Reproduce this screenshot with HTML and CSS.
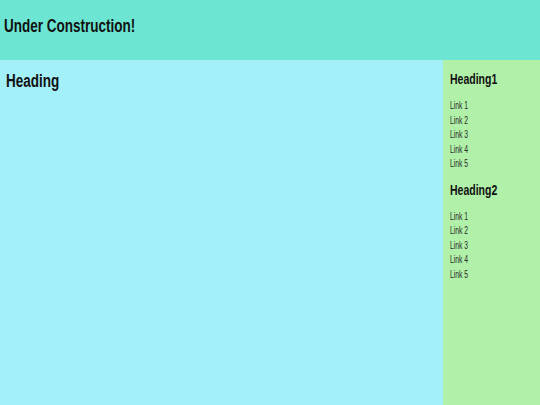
FILE: index.html
```html
<!DOCTYPE html>
<html lang="en">
<head>
    <meta charset="UTF-8">
    <meta name="viewport" content="width=device-width, initial-scale=1.0">
    <title>Under Construction</title>
    <link rel="stylesheet" href="styles.css">
</head>
<body>
    <header class="site-header">
        <h1 class="narrow">Under Construction!</h1>
    </header>
    <div class="page">
        <main class="content">
            <h2 class="narrow">Heading</h2>
        </main>
        <aside class="sidebar">
            <div class="narrow">
                <h3>Heading1</h3>
                <ul>
                    <li><a href="#">Link 1</a></li>
                    <li><a href="#">Link 2</a></li>
                    <li><a href="#">Link 3</a></li>
                    <li><a href="#">Link 4</a></li>
                    <li><a href="#">Link 5</a></li>
                </ul>
                <h3>Heading2</h3>
                <ul>
                    <li><a href="#">Link 1</a></li>
                    <li><a href="#">Link 2</a></li>
                    <li><a href="#">Link 3</a></li>
                    <li><a href="#">Link 4</a></li>
                    <li><a href="#">Link 5</a></li>
                </ul>
            </div>
        </aside>
    </div>
</body>
</html>
```

FILE: styles.css
```css
* {
    box-sizing: border-box;
    margin: 0;
    padding: 0;
    font-family: 'Liberation Sans Narrow', 'Arial Narrow', 'Liberation Sans', Arial, sans-serif;
}

html, body {
    height: 100%;
}

body {
    display: flex;
    flex-direction: column;
    color: #111;
}

/* no condensed face installed, so squeeze the regular one */
.narrow {
    transform: scaleX(0.75);
    transform-origin: left top;
}

.site-header {
    background-color: #6ce6d2;
    height: 60px;
    padding: 16px 4px 0;
}

.site-header h1 {
    font-size: 18px;
    font-weight: bold;
}

.page {
    display: flex;
    flex: 1;
}

.content {
    flex: 1;
    background-color: #a3f0f9;
    padding: 11px 6px;
}

.content h2 {
    font-size: 18px;
    font-weight: bold;
}

.sidebar {
    width: 97px;
    background-color: #b0f0a8;
    padding: 11px 7px;
}

.sidebar h3 {
    font-size: 14px;
    font-weight: bold;
    margin-bottom: 12px;
}

.sidebar ul {
    list-style: none;
    margin-bottom: 10px;
}

.sidebar li {
    font-size: 10px;
    line-height: 14.5px;
    transform: scaleX(0.9);
    transform-origin: left top;
}

.sidebar a {
    color: #2a2a2a;
    text-decoration: none;
}
```
